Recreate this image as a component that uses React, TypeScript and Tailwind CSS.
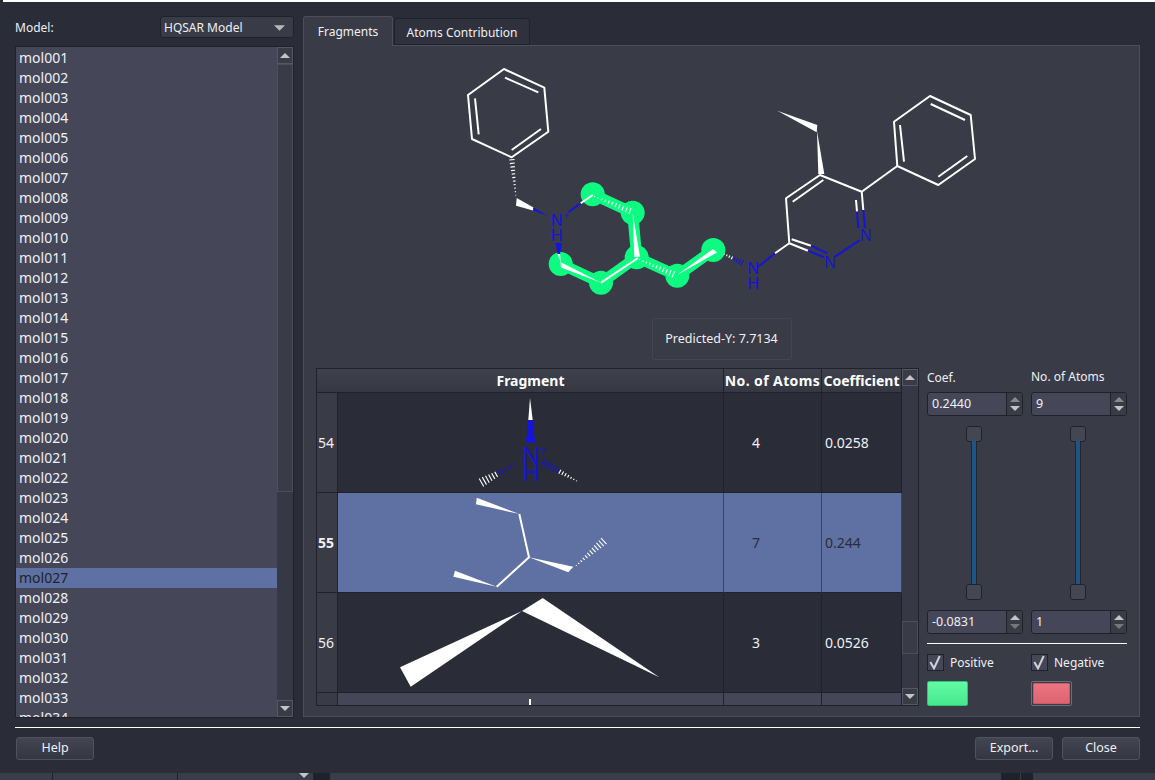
const mols = Array.from({ length: 34 }, (_, i) => 'mol' + String(i + 1).padStart(3, '0'));

type Pt = [number, number];

// hashed stereo bond: short lines growing from narrow end to wide end
function Hash({ from, to, wide, n = 10, color = 'white', color2 }: { from: Pt; to: Pt; wide: number; n?: number; color?: string; color2?: string }) {
  const dx = to[0] - from[0];
  const dy = to[1] - from[1];
  const len = Math.hypot(dx, dy);
  const nx = -dy / len;
  const ny = dx / len;
  return (
    <g strokeWidth={1.1}>
      {Array.from({ length: n }, (_, i) => {
        const t = (i + 0.5) / n;
        const x = from[0] + dx * t;
        const y = from[1] + dy * t;
        const w = (wide * t) / 2 + 0.3;
        return <line key={i} x1={x - nx * w} y1={y - ny * w} x2={x + nx * w} y2={y + ny * w} stroke={color2 && t > 0.5 ? color2 : color} />;
      })}
    </g>
  );
}

function Lines({ pts, color = 'white', width = 2, close = false }: { pts: Pt[]; color?: string; width?: number; close?: boolean }) {
  const d = pts.map((p, i) => (i ? 'L' : 'M') + p[0] + ' ' + p[1]).join(' ') + (close ? ' Z' : '');
  return <path d={d} fill="none" stroke={color} strokeWidth={width} strokeLinejoin="round" />;
}

const BLUE = '#1414dc';
const GREEN = '#0dfb80';
const greenAtoms: Pt[] = [[592.7, 194.3], [632.7, 212.7], [636.7, 257.3], [677.3, 275.7], [713.3, 250], [560.7, 264], [601, 282.7]];

function Molecule() {
  return (
    <svg viewBox="304 46 835 272" className="w-[835px] h-[272px] block shrink-0">
      {/* highlighted fragment */}
      <Lines pts={[[592.7, 194.3], [632.7, 212.7], [636.7, 257.3], [677.3, 275.7], [713.3, 250]]} color={GREEN} width={11} />
      <Lines pts={[[636.7, 257.3], [601, 282.7], [560.7, 264]]} color={GREEN} width={11} />
      {greenAtoms.map((p, i) => <circle key={i} cx={p[0]} cy={p[1]} r={12} fill={GREEN} />)}

      {/* benzyl ring */}
      <Lines close pts={[[504, 69], [544.3, 87.7], [548.3, 131.7], [511.7, 157.3], [472, 139], [468, 95]]} />
      <Lines pts={[[505, 77.7], [538.3, 92.3]]} />
      <Lines pts={[[475, 98.3], [478.7, 134.3]]} />
      <Lines pts={[[541, 129], [511.7, 150]]} />
      <Hash from={[516, 197]} to={[511.7, 158]} wide={5} n={11} />
      <polygon points="516.7,198 516,205.7 533,210.5 533.5,207.5" fill="white" />
      <polygon points="533,210.5 533.5,207.5 548,216" fill={BLUE} />

      {/* N+ bonds */}
      <Lines pts={[[568.3, 212.3], [580.7, 203.3]]} color={BLUE} />
      <Lines pts={[[580.7, 203.3], [592.7, 195]]} />
      <polygon points="555.5,243 562,243 560,254 557.5,254" fill={BLUE} />
      <polygon points="557.5,254 560,254 561,263" fill="white" />

      {/* piperidine part */}
      <Hash from={[592.7, 195.7]} to={[631.7, 211.7]} wide={6} n={11} />
      <polygon points="632.7,213.3 634.3,257 640,256.7" fill="white" />
      <Lines pts={[[638, 258], [601, 282.7]]} />
      <polygon points="601,282.7 560.5,262 561,267.5" fill="white" />
      <Hash from={[638, 259]} to={[675, 275]} wide={6} n={11} />
      <polygon points="677,275 713,249 717,252.5" fill="white" />
      <Hash from={[723, 253.5]} to={[743.3, 263.5]} wide={6} n={8} color="white" color2={BLUE} />

      {/* NH linker */}
      <Lines pts={[[758.3, 266.7], [775, 253.3]]} color={BLUE} />
      <Lines pts={[[775, 253.3], [789.3, 243.3]]} />

      {/* pyridazine */}
      <Lines pts={[[808, 250.7], [789.3, 243.3], [786, 198.3], [820, 175], [861.7, 191.7], [863.3, 210]]} />
      <Lines pts={[[808, 250.7], [824, 257.3]]} color={BLUE} />
      <Lines pts={[[863.3, 210], [865, 228]]} color={BLUE} />
      <Lines pts={[[860, 240], [835, 256.7]]} color={BLUE} />
      <Lines pts={[[792.7, 201.7], [823.3, 180]]} />
      <Lines pts={[[791.7, 239.3], [811, 245.7]]} />
      <Lines pts={[[811, 245.7], [827.3, 253.3]]} color={BLUE} />
      <Lines pts={[[856, 200], [857, 211.7]]} />
      <Lines pts={[[857, 211.7], [858.3, 228]]} color={BLUE} />

      {/* ethyl */}
      <polygon points="817,131 818.3,174 824.3,174" fill="white" />
      <polygon points="777.3,110.7 817.3,125 816.7,132.3" fill="white" />

      {/* phenyl */}
      <Lines pts={[[861.7, 191.7], [897.3, 166]]} />
      <Lines close pts={[[897.3, 166], [894, 121.7], [930, 96], [970.7, 115], [975, 159], [938.3, 185]]} />
      <Lines pts={[[904, 161.7], [900, 125]]} />
      <Lines pts={[[930.7, 104], [965, 120]]} />
      <Lines pts={[[967.3, 156], [938.3, 176.7]]} />

      {/* atom labels */}
      <g fill={BLUE} fontFamily="'Liberation Sans', sans-serif" fontSize={16} textAnchor="middle">
        <text x={556.7} y={226}>N</text>
        <text x={556.7} y={241}>H</text>
        <text x={566.5} y={219} fontSize={9}>+</text>
        <text x={753.3} y={274}>N</text>
        <text x={753.3} y={289}>H</text>
        <text x={830} y={267.5}>N</text>
        <text x={865.7} y={241}>N</text>
      </g>
    </svg>
  );
}

function Frag54() {
  return (
    <svg viewBox="338 393 385 99" className="w-[385px] h-[99px] block">
      <polygon points="530,397.7 528.3,420 532.7,420" fill="white" />
      <polygon points="528.3,420 532.7,420 535,442.7 526,442.7" fill={BLUE} />
      <Hash from={[518.3, 462.3]} to={[480, 483.3]} wide={9} n={13} color={BLUE} color2="white" />
      <Hash from={[578, 481.7]} to={[541.7, 461.7]} wide={8} n={13} color="white" color2={BLUE} />
      <g fill={BLUE} fontFamily="'Liberation Sans', sans-serif" fontSize={23} textAnchor="middle">
        <text x={530.7} y={463.5}>N</text>
        <text x={530.7} y={480.5}>H</text>
        <text x={543.5} y={454} fontSize={12}>+</text>
      </g>
    </svg>
  );
}

function Frag55() {
  return (
    <svg viewBox="338 493 385 99" className="w-[385px] h-[99px] block">
      <polygon points="519.3,514 476.7,497.7 476,504.3" fill="white" />
      <Lines pts={[[519.3, 514], [529, 557.3], [496.7, 586.7]]} />
      <polygon points="529,557.3 573.3,566.7 568.3,572.3" fill="white" />
      <Hash from={[575, 566.7]} to={[605, 540]} wide={8} n={12} />
      <polygon points="496.7,586.7 455,570.7 453.3,576.7" fill="white" />
    </svg>
  );
}

function Frag56() {
  return (
    <svg viewBox="338 593 385 99" className="w-[385px] h-[99px] block">
      <polygon points="522,611 400,667.3 410.7,686.7" fill="white" />
      <polygon points="659.3,677.3 522,611 542.7,598" fill="white" />
    </svg>
  );
}

function Tri({ up = false, color = '#c4c4c8', w = 10, h = 5 }: { up?: boolean; color?: string; w?: number; h?: number }) {
  return (
    <svg width={w} height={h} viewBox="0 0 10 5" className="block">
      <polygon points={up ? '0,5 10,5 5,0' : '0,0 10,0 5,5'} fill={color} />
    </svg>
  );
}

function ScrollBtn({ up = false }: { up?: boolean }) {
  return (
    <div className="h-[17px] shrink-0 border border-[#555764] bg-[#393b47] flex items-center justify-center">
      <Tri up={up} />
    </div>
  );
}

function Spin({ value, dimUp = false }: { value: string; dimUp?: boolean }) {
  return (
    <div className="h-[24px] border border-[#20222b] rounded-[3px] bg-[#454759] flex overflow-hidden">
      <div className="flex-1 pl-[4px] text-[12.5px] leading-[22px] text-[#eef0f4]">{value}</div>
      <div className="w-[16px] border-l border-[#20222b] bg-[#393b47] flex flex-col items-center justify-center gap-[4px]">
        <Tri up color={dimUp ? '#c4c4c8' : '#8a8a8e'} />
        <Tri color={dimUp ? '#77777c' : '#c4c4c8'} />
      </div>
    </div>
  );
}

function Handle() {
  return <div className="w-[16px] h-[16px] shrink-0 rounded-[3px] border border-[#20222b] bg-[#454653]" />;
}

function Slider() {
  return (
    <div className="h-[174px] flex flex-col items-center pr-[2px]">
      <Handle />
      <div className="flex-1 w-[6px] -my-[1px] bg-[#1d5585] border-x border-[#23252f]" />
      <Handle />
    </div>
  );
}

function Check({ label }: { label: string }) {
  return (
    <div className="h-[17px] flex items-center gap-[6px]">
      <div className="w-[17px] h-[17px] border border-[#20222b] bg-[#454759]">
        <svg width="15" height="15" viewBox="1 1 15 15" className="block">
          <path d="M3.3 8 L7 14.3 L12.7 2" fill="none" stroke="#d4d4d8" strokeWidth="2" />
        </svg>
      </div>
      <span className="text-[12px] text-[#eef0f4]">{label}</span>
    </div>
  );
}

function Btn({ label }: { label: string }) {
  return (
    <button className="w-[78px] h-[23px] rounded-[3px] border border-[#50525e] bg-linear-to-b from-[#434552] to-[#343642] text-[12.5px] text-[#eef0f4]">
      {label}
    </button>
  );
}

const headCell = 'border-b border-[#20222b] bg-linear-to-b from-[#3f414d] to-[#353743] text-center text-[14px] leading-[23px] font-bold text-white whitespace-nowrap';
const rowHead = 'border-b border-[#20222b] border-r bg-[#393b47] flex items-center justify-center pr-[2px] text-[14px]';
const cell = 'border-r border-b border-[#20222b] flex items-center text-[14px]';
const atomCell = cell + ' justify-center pr-[33px]';
const coefCell = cell + ' justify-start pl-[3px]';
const selCell = 'bg-[#5f70a3] text-[#2a2c38] border-r-[#3a4266]';

export default function App() {
  return (
    <div className="w-[1155px] h-[780px] overflow-hidden flex flex-col bg-[#2a2c38] text-[#eef0f4] font-['Noto_Sans',sans-serif]">
      <div className="h-[2px] ml-[3px] bg-white shrink-0" />

      <div className="flex pl-[15px] pr-[15px] pt-[14px] gap-[9px] h-[716px] shrink-0">
        {/* left column */}
        <div className="w-[279px] flex flex-col">
          <div className="h-[22px] flex items-center justify-between">
            <span className="text-[12px] pt-[2px]">Model:</span>
            <div className="w-[134px] h-[22px] rounded-[3px] border border-[#20222b] bg-[#393b47] flex items-center justify-between pl-[3px] pr-[8px] pt-[1px] text-[12px]">
              HQSAR Model
              <Tri color="#b8b8bc" w={11} h={6} />
            </div>
          </div>
          <div className="mt-[8px] h-[672px] flex border border-[#20222b]">
            <div className="flex-1 bg-[#454759] overflow-hidden pt-[1px]">
              {mols.map((m) => (
                <div key={m} className={m === 'mol027' ? 'h-[20px] leading-[20px] pl-[3px] text-[14px] bg-[#5f70a3] text-[#20222b]' : 'h-[20px] leading-[20px] pl-[3px] text-[14px]'}>
                  {m}
                </div>
              ))}
            </div>
            <div className="w-[16px] flex flex-col bg-[#363845]">
              <ScrollBtn up />
              <div className="h-[428px] border border-[#4c4e5a] bg-[#393b47]" />
              <div className="flex-1" />
              <ScrollBtn />
            </div>
          </div>
        </div>

        {/* right column */}
        <div className="w-[837px] flex flex-col">
          <div className="h-[29px] flex items-end gap-[1px]">
            <div className="w-[90px] h-[30px] -mb-[1px] z-10 rounded-t-[3px] border border-b-0 border-[#4c4e5a] bg-[#393b47] flex items-center justify-center text-[12px]">
              Fragments
            </div>
            <div className="w-[136px] h-[27px] rounded-t-[3px] border border-[#20222b] bg-[#2f313d] flex items-center justify-center pt-[2px] text-[12px]">
              Atoms Contribution
            </div>
          </div>
          <div className="h-[672px] border border-[#4c4e5a] bg-[#393b47] flex flex-col items-center">
            <Molecule />
            <div className="w-[140px] h-[42px] shrink-0 rounded-[2px] border border-[#43454f] flex items-center justify-center text-[12.5px]">
              Predicted-Y: 7.7134
            </div>
            <div className="self-stretch flex mt-[8px] pl-[12px] gap-[8px]">
              {/* table */}
              <div className="w-[603px] h-[338px] border border-[#20222b] flex">
                <div className="grid grid-cols-[21px_386px_98px_80px] grid-rows-[24px_100px_100px_100px_13px] w-[585px] bg-[#2a2c38] overflow-hidden">
                  <div className={headCell} />
                  <div className={headCell + ' border-r'}>Fragment</div>
                  <div className={headCell + ' border-r tracking-[0.4px]'}>No. of Atoms</div>
                  <div className={headCell + ' border-r'}>Coefficient</div>

                  <div className={rowHead}>54</div>
                  <div className="border-r border-b border-[#20222b]"><Frag54 /></div>
                  <div className={atomCell}>4</div>
                  <div className={coefCell}>0.0258</div>

                  <div className={rowHead + ' font-bold'}>55</div>
                  <div className="border-b border-[#20222b] bg-[#5f70a3] border-r border-r-[#3a4266]"><Frag55 /></div>
                  <div className={atomCell + ' ' + selCell}>7</div>
                  <div className={coefCell + ' ' + selCell}>0.244</div>

                  <div className={rowHead}>56</div>
                  <div className="border-r border-b border-[#20222b]"><Frag56 /></div>
                  <div className={atomCell}>3</div>
                  <div className={coefCell}>0.0526</div>

                  <div className="border-r border-[#20222b] bg-[#393b47]" />
                  <div className="border-r border-[#20222b] bg-[#454759] flex justify-center items-end">
                    <div className="w-[2px] h-[7px] bg-white -ml-[2px]" />
                  </div>
                  <div className="border-r border-[#20222b] bg-[#454759]" />
                  <div className="border-r border-[#20222b] bg-[#454759]" />
                </div>
                <div className="w-[16px] ml-auto flex flex-col bg-[#363845]">
                  <ScrollBtn up />
                  <div className="h-[235px]" />
                  <div className="h-[33px] border border-[#4c4e5a] bg-[#393b47]" />
                  <div className="flex-1" />
                  <ScrollBtn />
                </div>
              </div>

              {/* filters */}
              <div className="w-[201px] grid grid-cols-[96px_96px] gap-x-[8px] grid-rows-[24px_24px_174px_24px_1px_17px_25px] content-start">
                <span className="text-[12px] leading-[20px]">Coef.</span>
                <span className="text-[12px] leading-[18px]">No. of Atoms</span>
                <Spin value="0.2440" />
                <Spin value="9" />
                <div className="mt-[10px]"><Slider /></div>
                <div className="mt-[10px]"><Slider /></div>
                <div className="mt-[20px]"><Spin value="-0.0831" dimUp /></div>
                <div className="mt-[20px]"><Spin value="1" dimUp /></div>
                <div className="col-span-2 h-[1px] bg-white mt-[29px]" />
                <div className="mt-[39px]"><Check label="Positive" /></div>
                <div className="mt-[39px]"><Check label="Negative" /></div>
                <div className="mt-[49px] w-[41px] h-[25px] rounded-[2px] border border-[#2dc478] bg-linear-to-b from-[#62fba4] to-[#45e88d]" />
                <div className="mt-[49px] w-[41px] h-[25px] rounded-[2px] border border-[#6a6c80] p-[1px]">
                  <div className="h-full rounded-[1px] border border-[#c95a68] bg-linear-to-b from-[#ec7480] to-[#dc6470]" />
                </div>
              </div>
            </div>
          </div>
        </div>
      </div>

      <div className="h-[1px] mt-[9px] ml-[15px] mr-[15px] bg-white shrink-0" />
      <div className="flex justify-between mt-[9px] pl-[16px] pr-[15px] shrink-0">
        <Btn label="Help" />
        <div className="flex gap-[9px]">
          <Btn label="Export..." />
          <Btn label="Close" />
        </div>
      </div>
      {/* bits of the window underneath */}
      <div className="mt-[13px] flex-1 bg-[#3a3c4a] flex items-start">
        <div className="w-[53px] h-full border-r border-[#20222b]" />
        <div className="w-[125px] h-full border-r border-[#20222b]" />
        <div className="w-[121px] h-full" />
        <Tri color="#c4c4c8" />
        <div className="w-[4px]" />
        <div className="w-[17px] h-full bg-[#20222b]" />
        <div className="w-[671px] h-full" />
        <div className="w-[20px] h-full bg-[#20222b] border-r border-[#3a3c4a]" />
        <div className="w-[12px] h-full bg-[#20222b]" />
      </div>
    </div>
  );
}
